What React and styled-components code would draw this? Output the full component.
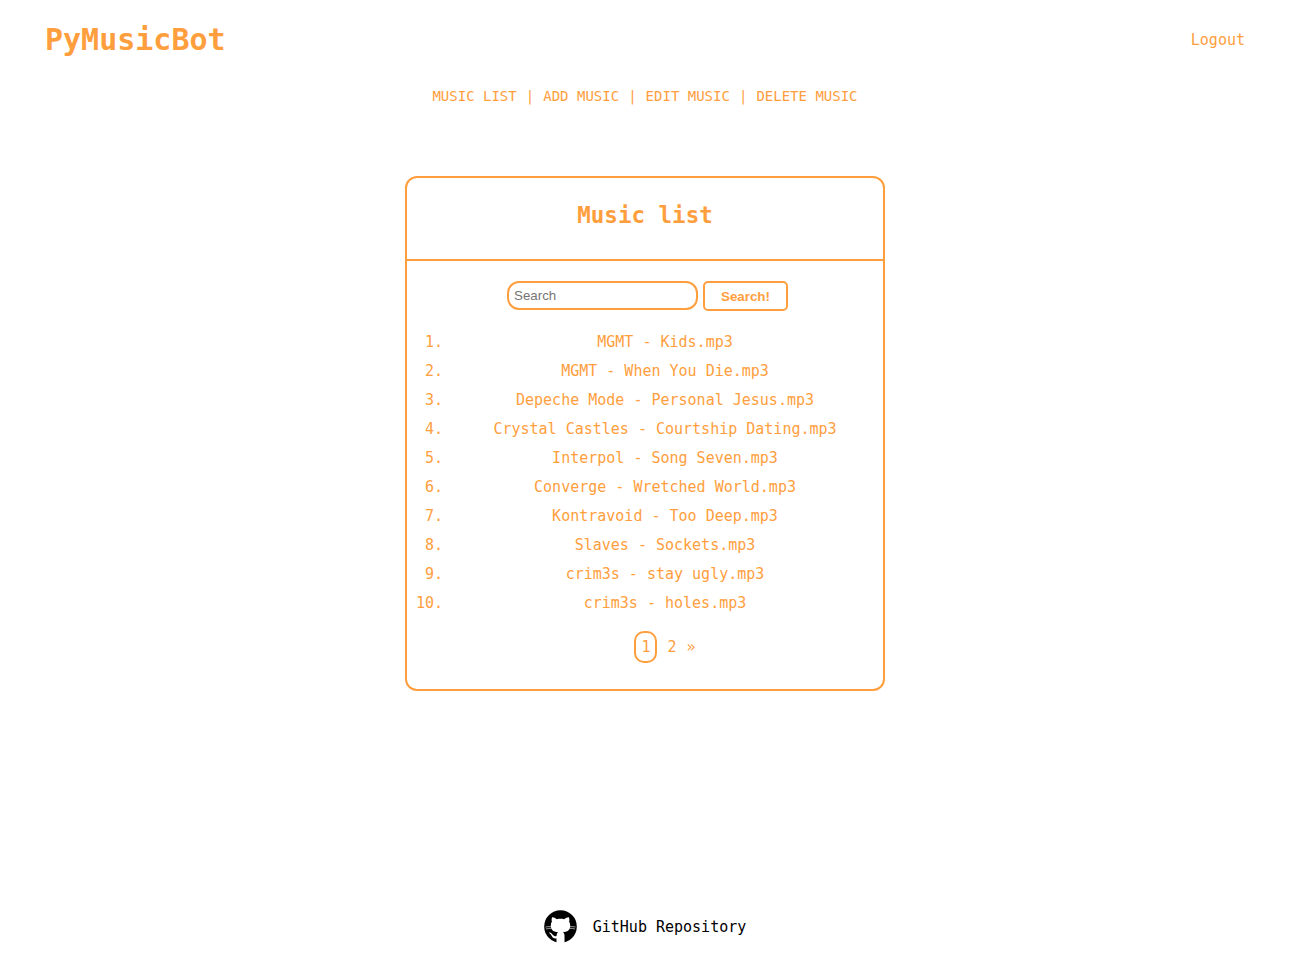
import React from "react";
import styled, { createGlobalStyle } from "styled-components";

const ACCENT = "#ff9e3d";

const GlobalStyle = createGlobalStyle`
  * {
    box-sizing: border-box;
  }
  body {
    margin: 0;
    background: #fff;
    color: ${ACCENT};
    font-family: "DejaVu Sans Mono", monospace;
    font-size: 15px;
  }
  a {
    color: inherit;
    text-decoration: none;
  }
`;

const Page = styled.div`
  display: flex;
  flex-direction: column;
  min-height: 100vh;
  padding-right: 23px;
`;

const Header = styled.header`
  display: flex;
  align-items: center;
  justify-content: space-between;
  height: 80px;
  padding: 0 45px;
`;

const Brand = styled.h1`
  margin: 0;
  font-size: 30px;
  line-height: 34px;
`;

const Nav = styled.nav`
  text-align: center;
  line-height: 32px;
`;

const NavText = styled.span`
  font-size: 14px;
`;

const Card = styled.main`
  width: 480px;
  max-width: 100%;
  margin: 64px auto 48px;
  padding-bottom: 26px;
  border: 2px solid ${ACCENT};
  border-radius: 12px;
`;

const CardHeader = styled.div`
  padding: 24px 0 31px;
  border-bottom: 2px solid ${ACCENT};
  text-align: center;
`;

const CardTitle = styled.h2`
  margin: 0;
  line-height: 26px;
`;

const SearchForm = styled.form`
  display: flex;
  justify-content: center;
  gap: 5px;
  padding: 20px 0 17px 5px;
`;

const SearchInput = styled.input`
  width: 191px;
  height: 29px;
  padding: 0 5px;
  border: 2px solid ${ACCENT};
  border-radius: 12px;
  background: #fff;
  font-family: "Liberation Sans", sans-serif;
`;

const SearchButton = styled.button`
  width: 85px;
  height: 30px;
  padding: 0;
  border: 2px solid ${ACCENT};
  border-radius: 5px;
  background: #fff;
  color: ${ACCENT};
  font-family: "Liberation Sans", sans-serif;
  font-weight: bold;
  cursor: pointer;
`;

const SongList = styled.ol`
  margin: 0;
  padding: 0 5px 0 45px;
  line-height: 29px;
  text-align: center;
`;

const Pagination = styled.nav`
  display: flex;
  justify-content: center;
  align-items: center;
  gap: 10px;
  padding: 13px 0 0 40px;
`;

const PageLink = styled.a`
  padding: ${(p) => (p.$current ? "0 5px" : "0")};
  border: ${(p) => (p.$current ? `2px solid ${ACCENT}` : "none")};
  border-radius: 10px;
  line-height: 28px;
`;

const Footer = styled.footer`
  display: flex;
  justify-content: center;
  margin-top: auto;
  padding-bottom: 11px;
`;

const RepoLink = styled.a`
  display: flex;
  align-items: center;
  gap: 16px;
  && {
    color: #000;
  }
`;

const links = ["MUSIC LIST", "ADD MUSIC", "EDIT MUSIC", "DELETE MUSIC"];

const songs = [
  "MGMT - Kids.mp3",
  "MGMT - When You Die.mp3",
  "Depeche Mode - Personal Jesus.mp3",
  "Crystal Castles - Courtship Dating.mp3",
  "Interpol - Song Seven.mp3",
  "Converge - Wretched World.mp3",
  "Kontravoid - Too Deep.mp3",
  "Slaves - Sockets.mp3",
  "crim3s - stay ugly.mp3",
  "crim3s - holes.mp3",
];

function GitHubMark() {
  return (
    <svg width="33" height="33" viewBox="0 0 33 33" aria-hidden="true">
      <circle cx="16.5" cy="16.5" r="16.3" />
      <path
        fill="#fff"
        d="M8 7.4C9.5 7.2 11.3 8.2 12.9 9.2 15.2 8.7 17.8 8.7 20.1 9.2 21.7 8.2 23.5 7.2 25 7.4 25.5 8.9 25.5 10.4 25.1 11.7 26.2 13.1 26.4 15.3 26 17.5 25.4 20.6 23 21.9 18.9 22.3 19.9 23 20.5 24 20.5 25.6V33.5H12.5V28.4C9.7 28.8 8.4 27.6 7.6 25.8 7.1 24.6 6.3 23.7 5.2 23.1 4.7 22.6 5.6 22.4 6.5 22.7 7.7 23.1 8.3 24.2 9 25.1 9.8 26.2 11.2 26.4 12.6 25.9 12.6 24.2 13.2 23 14.1 22.3 10 21.9 7.6 20.6 7 17.5 6.6 15.3 6.8 13.1 7.9 11.7 7.5 10.4 7.5 8.9 8 7.4Z"
      />
      <path
        d="M1.5 17Q4 16.4 7.2 16.7M1.9 19Q4.5 18.2 7.6 18.4M31.5 17Q29 16.4 25.8 16.7M31.1 19Q28.5 18.2 25.4 18.4"
        fill="none"
        stroke="#fff"
        strokeWidth=".6"
      />
    </svg>
  );
}

export default function App() {
  return (
    <Page>
      <GlobalStyle />
      <Header>
        <Brand>
          <a href="#home">PyMusicBot</a>
        </Brand>
        <a href="#logout">Logout</a>
      </Header>
      <Nav aria-label="Main">
        {links.map((label, i) => (
          <React.Fragment key={label}>
            {i > 0 && (
              <>
                {" "}
                <NavText>|</NavText>{" "}
              </>
            )}
            <NavText as="a" href={`#${label.toLowerCase().replace(" ", "-")}`}>
              {label}
            </NavText>
          </React.Fragment>
        ))}
      </Nav>
      <Card>
        <CardHeader>
          <CardTitle>Music list</CardTitle>
        </CardHeader>
        <SearchForm onSubmit={(e) => e.preventDefault()}>
          <SearchInput type="text" placeholder="Search" aria-label="Search" />
          <SearchButton type="submit">Search!</SearchButton>
        </SearchForm>
        <SongList>
          {songs.map((song) => (
            <li key={song}>{song}</li>
          ))}
        </SongList>
        <Pagination aria-label="Pages">
          <PageLink href="#page-1" $current aria-current="page">
            1
          </PageLink>
          <PageLink href="#page-2">2</PageLink>
          <PageLink href="#page-2" aria-label="Next page">
            »
          </PageLink>
        </Pagination>
      </Card>
      <Footer>
        <RepoLink href="#repository">
          <GitHubMark />
          GitHub Repository
        </RepoLink>
      </Footer>
    </Page>
  );
}
